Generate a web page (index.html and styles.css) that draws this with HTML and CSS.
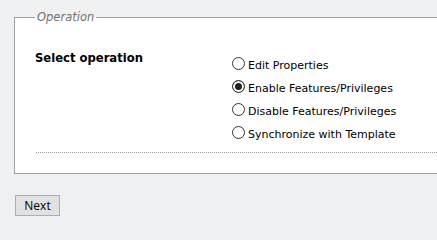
FILE: index.html
```html
<!DOCTYPE html>
<html>
<head>
<meta charset="utf-8">
<link rel="stylesheet" href="styles.css">
</head>
<body>
<div class="page">
  <fieldset class="panel">
    <legend class="panel-title">Operation</legend>
    <div class="field-row">
      <div class="field-label">Select operation</div>
      <div class="options">
        <label class="opt"><input type="radio" name="op" class="radio"><span>Edit Properties</span></label>
        <label class="opt"><input type="radio" name="op" class="radio" checked><span>Enable Features/Privileges</span></label>
        <label class="opt"><input type="radio" name="op" class="radio"><span>Disable Features/Privileges</span></label>
        <label class="opt"><input type="radio" name="op" class="radio"><span>Synchronize with Template</span></label>
      </div>
    </div>
    <div class="separator"></div>
  </fieldset>
  <button class="btn" type="button">Next</button>
</div>
</body>
</html>
```
FILE: styles.css
```css
html {
  overflow: hidden;
}
body {
  margin: 0;
  background: #eff0f2;
  font-family: "DejaVu Sans", Verdana, sans-serif;
  color: #000;
}
.page {
  padding: 11px 0 0 14px;
}
.panel {
  width: calc(100vw - 14px);
  margin: 0;
  padding: 0 0 20px 20px;
  border: 1px solid #a0a0a0;
  border-right: 0;
  background: #fff;
  box-sizing: border-box;
  min-width: 0;
}
.panel-title {
  padding: 0 2px;
  font-size: 11.5px;
  line-height: 12px;
  font-style: italic;
  color: #707070;
}
.field-row {
  display: grid;
  grid-template-columns: 197px 1fr;
  margin-top: 28px;
}
.field-label {
  font-weight: bold;
  font-size: 11.6px;
  line-height: 15px;
}
.options {
  padding-top: 3px;
  display: flex;
  flex-direction: column;
}
.opt {
  display: block;
  font-size: 11px;
  line-height: 23px;
  white-space: nowrap;
}
.radio {
  -webkit-appearance: none;
  appearance: none;
  width: 13px;
  height: 13px;
  margin: 0 3px 0 0;
  border: 1px solid #333;
  border-radius: 50%;
  background: #fff;
  vertical-align: -1px;
  box-sizing: border-box;
}
.radio:checked {
  background: #222;
  box-shadow: inset 0 0 0 2px #fff;
}
.separator {
  margin-top: 6px;
  border-top: 1px dotted #999;
  margin-left: 1px;
}
.btn {
  display: block;
  margin: 21px 0 0 1px;
  width: 45px;
  height: 21px;
  padding: 0;
  border: 1px solid #adadad;
  background: #e1e1e1;
  font-family: "Open Sans", "Noto Sans", sans-serif;
  font-size: 12px;
  color: #000;
}
```
